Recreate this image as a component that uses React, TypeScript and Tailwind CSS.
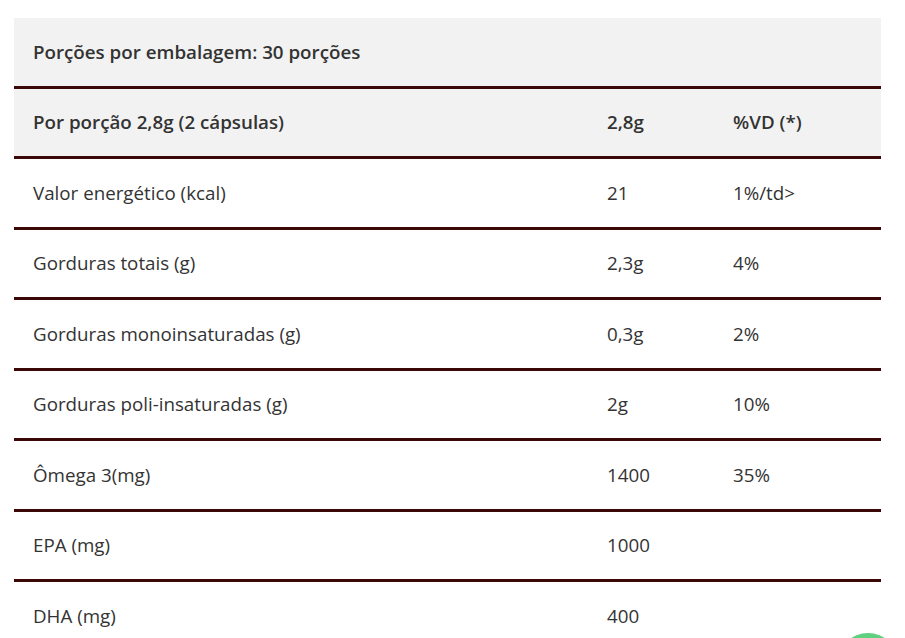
const ROWS: [string, string, string][] = [
  ['Valor energético (kcal)', '21', '1%/td>'],
  ['Gorduras totais (g)', '2,3g', '4%'],
  ['Gorduras monoinsaturadas (g)', '0,3g', '2%'],
  ['Gorduras poli-insaturadas (g)', '2g', '10%'],
  ['Ômega 3(mg)', '1400', '35%'],
  ['EPA (mg)', '1000', ''],
  ['DHA (mg)', '400', ''],
];

export default function App() {
  return (
    <div className="relative h-[638px] w-[905px] overflow-hidden bg-white font-['Open_Sans',sans-serif] text-[18.75px] text-[#333]">
      <div className="pl-[14px] pr-[24px] pt-[18px]">
        <table className="w-full border-collapse">
          <tbody>
            <tr className="border-b-[3px] border-[#3b0808] bg-[#f2f2f2]">
              <td colSpan={3} className="h-[69px] px-[19px] align-middle font-semibold">
                Porções por embalagem: 30 porções
              </td>
            </tr>
            <tr className="border-b-[3px] border-[#3b0808] bg-[#f2f2f2] font-semibold">
              <td className="h-[70.5px] w-[574px] px-[19px] align-middle">Por porção 2,8g (2 cápsulas)</td>
              <td className="w-[126px] px-[19px] align-middle">2,8g</td>
              <td className="px-[19px] align-middle">%VD (*)</td>
            </tr>
            {ROWS.map(([name, qty, vd]) => (
              <tr key={name} className="border-b-[3px] border-[#3b0808]">
                <td className="h-[70.5px] px-[19px] align-middle">{name}</td>
                <td className="px-[19px] align-middle">{qty}</td>
                <td className="px-[19px] align-middle">{vd}</td>
              </tr>
            ))}
          </tbody>
        </table>
      </div>
      <div className="absolute left-[838px] top-[633px] h-[60px] w-[60px] rounded-full bg-[#5fcf80]" />
    </div>
  );
}
